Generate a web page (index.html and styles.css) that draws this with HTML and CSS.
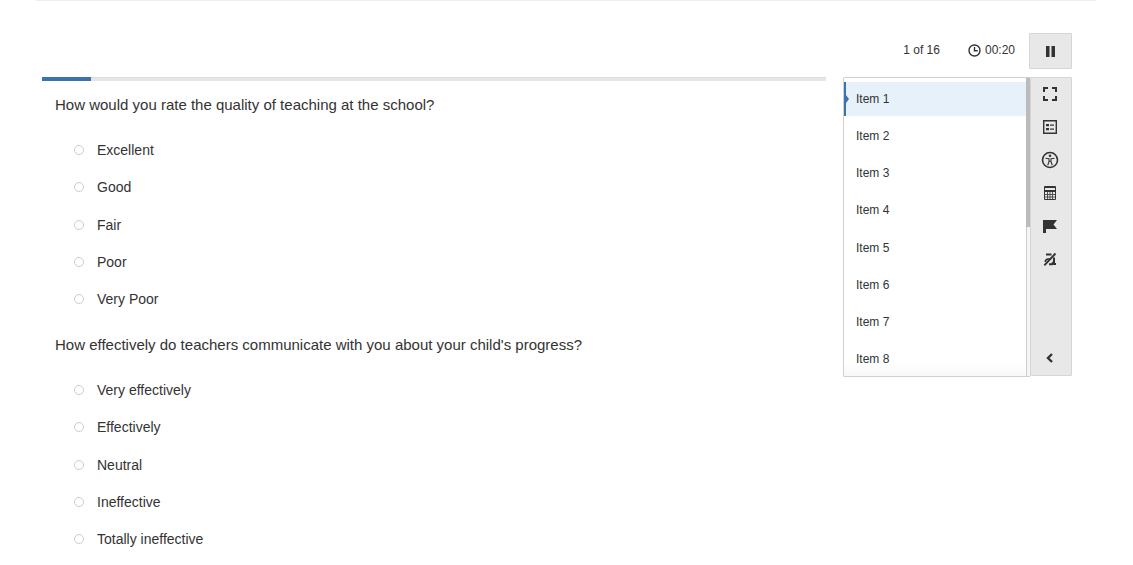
FILE: index.html
```html
<!DOCTYPE html>
<html lang="en">
  <head>
    <meta charset="UTF-8" />
    <meta name="viewport" content="width=device-width, initial-scale=1.0" />
    <title>School Survey</title>
    <link rel="stylesheet" href="styles.css">
  </head>
  <body>
    <div class="container">
      <!-- top bar -->
      <header class="topbar">
        <span class="item-count">1 of 16</span>
        <span class="timer">
          <svg width="13" height="13" viewBox="0 0 13 13" fill="none" stroke="#333" stroke-width="1.4" aria-hidden="true">
            <circle cx="6.5" cy="6.5" r="5.5" />
            <path d="M6.5 3v3.7h3.2" />
          </svg>
          <span>00:20</span>
        </span>
        <button type="button" class="pause-btn" aria-label="Pause">
          <svg width="10" height="12" viewBox="0 0 10 12" fill="#333" aria-hidden="true">
            <path d="M0 1h3.500v11H0zM5.500 1H9v11H5.500z" />
          </svg>
        </button>
      </header>

      <div class="content">
        <!-- questions start -->
        <main class="questions">
          <div class="progress"><div class="progress-bar" style="width: 6.25%"></div></div>
          <form class="question-form">
            <fieldset>
              <legend>How would you rate the quality of teaching at the school?</legend>
              <ul class="options">
                <li><label><input type="radio" name="teaching">Excellent</label></li>
                <li><label><input type="radio" name="teaching">Good</label></li>
                <li><label><input type="radio" name="teaching">Fair</label></li>
                <li><label><input type="radio" name="teaching">Poor</label></li>
                <li><label><input type="radio" name="teaching">Very Poor</label></li>
              </ul>
            </fieldset>
            <fieldset>
              <legend>How effectively do teachers communicate with you about your child's progress?</legend>
              <ul class="options">
                <li><label><input type="radio" name="progress">Very effectively</label></li>
                <li><label><input type="radio" name="progress">Effectively</label></li>
                <li><label><input type="radio" name="progress">Neutral</label></li>
                <li><label><input type="radio" name="progress">Ineffective</label></li>
                <li><label><input type="radio" name="progress">Totally ineffective</label></li>
              </ul>
            </fieldset>
          </form>
        </main>
        <!-- questions end -->

        <!-- side panel start -->
        <aside class="side">
          <nav class="item-nav" aria-label="Items">
            <ul class="item-list">
              <li><a href="#" class="active">Item 1</a></li>
              <li><a href="#">Item 2</a></li>
              <li><a href="#">Item 3</a></li>
              <li><a href="#">Item 4</a></li>
              <li><a href="#">Item 5</a></li>
              <li><a href="#">Item 6</a></li>
              <li><a href="#">Item 7</a></li>
              <li><a href="#">Item 8</a></li>
            </ul>
            <div class="scroll-track"><div class="scroll-thumb"></div></div>
          </nav>
          <div class="toolbar">
            <button type="button" aria-label="Fullscreen">
              <svg width="18" height="18" viewBox="0 0 18 18" fill="none" stroke="#333" stroke-width="2" aria-hidden="true">
                <path d="M3 7V3h4M11 3h4v4M15 11v4h-4M7 15H3v-4" />
              </svg>
            </button>
            <button type="button" aria-label="Review">
              <svg width="18" height="18" viewBox="0 0 18 18" aria-hidden="true">
                <path d="M2.700 2.700h12.600v12.600H2.700z" fill="none" stroke="#333" stroke-width="1.400" />
                <path d="M5 6h3v2.300H5zM5 10h3v2.300H5zM9 6.500h4v1.200H9zM9 10.500h4v1.200H9z" fill="#333" />
              </svg>
            </button>
            <button type="button" aria-label="Accessibility">
              <svg width="18" height="18" viewBox="0 0 18 18" fill="none" stroke="#333" aria-hidden="true">
                <circle cx="9" cy="9" r="7.500" stroke-width="1.600" />
                <circle cx="9" cy="4.800" r="1.300" fill="#333" stroke="none" />
                <path d="M4.500 7.200l3.500.500v3l-1.300 3.600M13.500 7.200l-3.500.500v3l1.300 3.600M8 10.300h2" stroke-width="1.100" />
              </svg>
            </button>
            <button type="button" aria-label="Calculator">
              <svg width="18" height="18" viewBox="0 0 18 18" aria-hidden="true">
                <path d="M3.500 2.500h11v13h-11z" fill="#e8e8e8" stroke="#333" />
                <path d="M4 3h10v1H4zM4 6h10v2H4z" fill="#333" />
                <path d="M4 10.500h10M4 13h10M6.500 8v7M9 8v7M11.500 8v7" fill="none" stroke="#333" stroke-width=".8" />
              </svg>
            </button>
            <button type="button" aria-label="Flag">
              <svg width="18" height="18" viewBox="0 0 18 18" fill="#333" aria-hidden="true">
                <path d="M2 3h14l-3.500 4.500L16 12H5v4H2z" />
              </svg>
            </button>
            <button type="button" aria-label="Answer masking">
              <svg width="18" height="18" viewBox="0 0 18 18" fill="none" stroke="#333" aria-hidden="true">
                <path d="M5 4.500h5.500M13 7.500V14h2M8 14.200h3l1.500-2" stroke-width="2" />
                <path d="M9.500 8.700C6 8.700 4.200 9.800 4.300 12" stroke-width="1.600" />
                <path d="M3.300 15.300L14.500 3.500" stroke-width="1.900" />
              </svg>
            </button>
            <button type="button" class="collapse-btn" aria-label="Collapse">
              <svg width="18" height="18" viewBox="0 0 18 18" fill="none" stroke="#333" stroke-width="2.400" aria-hidden="true">
                <path d="M11 5L7 9l4 4" />
              </svg>
            </button>
          </div>
        </aside>
        <!-- side panel end -->
      </div>
    </div>
  </body>
</html>
```

FILE: styles.css
```css
*{
    padding: 0;
    margin: 0;
    box-sizing: border-box;
}
body{
    font-family: "Liberation Sans", Arial, sans-serif;
    font-size: 14px;
    color: #333;
    background: #fff;
}
ul{
    list-style: none;
}
button{
    border: none;
    background: none;
    cursor: pointer;
    display: flex;
    align-items: center;
    justify-content: center;
}
.container{
    margin: 0 37px 0 36px;
    padding: 32px 24px 0 6px;
    border-top: 1px solid #eee;
}

/* top bar */
.topbar{
    display: flex;
    justify-content: flex-end;
    font-size: 12px;
    line-height: 34px;
    margin-bottom: 8px;
}
.item-count{
    margin-right: 28px;
}
.timer{
    display: flex;
    align-items: center;
    gap: 4px;
    height: 34px;
    margin-right: 14px;
}
.pause-btn{
    width: 43px;
    height: 36px;
    background: #e8e8e8;
    border: 1px solid #d5d5d5;
    border-radius: 1px;
}

/* questions */
.content{
    display: flex;
    align-items: flex-start;
    gap: 17px;
}
.questions{
    flex: 1;
}
.progress{
    height: 4px;
    background: #e6e6e6;
    border-top: 1px solid #dcdcdc;
}
.progress-bar{
    height: 4px;
    margin-top: -1px;
    background: #3b73af;
}
.question-form{
    padding: 14px 13px 0;
}
fieldset{
    border: none;
    margin-bottom: 26px;
}
legend{
    font-size: 15px;
    line-height: 20px;
}
.options{
    display: grid;
    align-content: space-between;
    min-height: 194px;
    padding: 25px 0 0 19px;
}
.options label{
    display: flex;
    align-items: center;
    gap: 13px;
    line-height: 20px;
}
.options input{
    appearance: none;
    width: 10px;
    height: 10px;
    border: 1px solid #ccc;
    border-radius: 50%;
    background: #fff;
}

/* side panel */
.side{
    display: flex;
    width: 229px;
    height: 300px;
}
.item-nav{
    flex: 1;
    display: flex;
    border: 1px solid #d0d0d0;
    border-right: none;
    border-radius: 2px 0 0 2px;
    background: linear-gradient(#fff 95%, #f8f8f8);
}
.item-list{
    flex: 1;
    display: grid;
    align-content: space-between;
    padding-top: 4px;
}
.item-list a{
    display: flex;
    align-items: center;
    height: 34px;
    padding-left: 12px;
    font-size: 12px;
    color: #333;
    text-decoration: none;
}
.item-list .active{
    background: #e6f1fa;
    border-left: 2px solid #3b73af;
    padding-left: 0;
}
.item-list .active::before{
    content: "";
    border: 4px solid transparent;
    border-left: 3px solid #3b73af;
    border-right: none;
    margin-right: 7px;
}
.scroll-track{
    width: 4px;
    background: #f5f5f5;
    border-left: 1px solid #ccc;
}
.scroll-thumb{
    height: 50%;
    margin-left: -1px;
    background: #bbb;
}
.toolbar{
    display: flex;
    flex-direction: column;
    width: 42px;
    height: 299px;
    background: #e8e8e8;
    border: 1px solid #d5d5d5;
    border-radius: 0 1px 1px 0;
}
.toolbar button{
    height: 33px;
    padding: 0 3px 2px 0;
}
.toolbar .collapse-btn{
    margin-top: auto;
}
```
